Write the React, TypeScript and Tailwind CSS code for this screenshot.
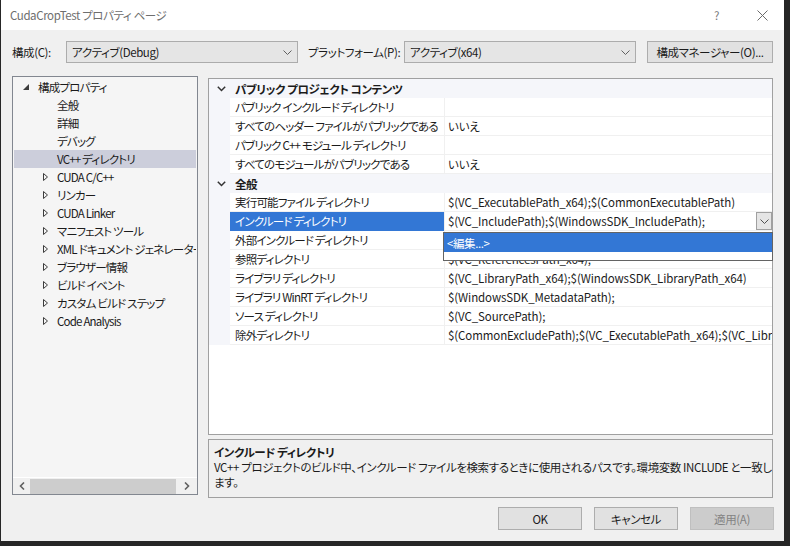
import React from "react";

type Row = { name: string; value: string; selected?: boolean };
type Section = { title: string; rows: Row[] };

const sections: Section[] = [
  {
    title: "パブリック プロジェクト コンテンツ",
    rows: [
      { name: "パブリック インクルード ディレクトリ", value: "" },
      { name: "すべてのヘッダー ファイルがパブリックである", value: "いいえ" },
      { name: "パブリック C++ モジュール ディレクトリ", value: "" },
      { name: "すべてのモジュールがパブリックである", value: "いいえ" },
    ],
  },
  {
    title: "全般",
    rows: [
      { name: "実行可能ファイル ディレクトリ", value: "$(VC_ExecutablePath_x64);$(CommonExecutablePath)" },
      { name: "インクルード ディレクトリ", value: "$(VC_IncludePath);$(WindowsSDK_IncludePath);", selected: true },
      { name: "外部インクルード ディレクトリ", value: "" },
      { name: "参照ディレクトリ", value: "$(VC_ReferencesPath_x64);" },
      { name: "ライブラリ ディレクトリ", value: "$(VC_LibraryPath_x64);$(WindowsSDK_LibraryPath_x64)" },
      { name: "ライブラリ WinRT ディレクトリ", value: "$(WindowsSDK_MetadataPath);" },
      { name: "ソース ディレクトリ", value: "$(VC_SourcePath);" },
      { name: "除外ディレクトリ", value: "$(CommonExcludePath);$(VC_ExecutablePath_x64);$(VC_LibraryPath_x64);" },
    ],
  },
];

const treeItems: { label: string; expander: boolean; selected?: boolean }[] = [
  { label: "全般", expander: false },
  { label: "詳細", expander: false },
  { label: "デバッグ", expander: false },
  { label: "VC++ ディレクトリ", expander: false, selected: true },
  { label: "CUDA C/C++", expander: true },
  { label: "リンカー", expander: true },
  { label: "CUDA Linker", expander: true },
  { label: "マニフェスト ツール", expander: true },
  { label: "XML ドキュメント ジェネレーター", expander: true },
  { label: "ブラウザー情報", expander: true },
  { label: "ビルド イベント", expander: true },
  { label: "カスタム ビルド ステップ", expander: true },
  { label: "Code Analysis", expander: true },
];

function Chevron({ color = "#606060" }: { color?: string }) {
  return (
    <svg width="9" height="5" viewBox="0 0 9 5">
      <polyline points="0.5,0.5 4.5,4.5 8.5,0.5" fill="none" stroke={color} strokeWidth="1" />
    </svg>
  );
}

function Combo({ text }: { text: string }) {
  return (
    <div className="w-[232px] h-[22px] shrink-0 bg-[#e5e5e5] border border-[#acacac] flex items-center pl-[5px] pr-[5px]">
      <span className="flex-1 whitespace-nowrap">{text}</span>
      <Chevron />
    </div>
  );
}

function Button({ label, disabled }: { label: string; disabled?: boolean }) {
  return (
    <div
      className={`w-[84px] h-[23px] flex items-center justify-center border ${
        disabled ? "bg-[#cccccc] border-[#bfbfbf] text-[#838383]" : "bg-[#e1e1e1] border-[#adadad]"
      }`}
    >
      {label}
    </div>
  );
}

export default function App() {
  return (
    <div className="w-[790px] h-[546px] bg-[#262626] pl-px overflow-hidden font-['Noto_Sans_CJK_JP',sans-serif] [font-feature-settings:'palt'] text-[11.5px] tracking-[-0.4px] leading-[16px] text-[#1b1b1b]">
      <div className="w-[783px] h-[541px] bg-[#f0f0f0] flex flex-col">
        {/* Title bar */}
        <div className="h-[30px] bg-white flex items-center pl-[9px] pr-[16px] text-[#6e6e6e]">
          <span className="flex-1">CudaCropTest プロパティ ページ</span>
          <span className="mr-[38px] text-[#777]">?</span>
          <svg width="11" height="11" viewBox="0 0 11 11">
            <path d="M0.5 0.5 L10.5 10.5 M10.5 0.5 L0.5 10.5" stroke="#6b6b6b" strokeWidth="1" />
          </svg>
        </div>

        {/* Configuration row */}
        <div className="mt-[11px] h-[22px] flex items-center pl-[11px] whitespace-nowrap">
          <span className="w-[54px] shrink-0">構成(C):</span>
          <Combo text="アクティブ(Debug)" />
          <span className="ml-[10px] w-[96px] shrink-0">プラットフォーム(P):</span>
          <Combo text="アクティブ(x64)" />
          <div className="ml-[11px] w-[126px] h-[22px] shrink-0 bg-[#e1e1e1] border border-[#adadad] flex items-center justify-center">
            構成マネージャー(O)...
          </div>
        </div>

        {/* Main area */}
        <div className="mt-[13px] h-[422px] flex pl-[11px]">
          {/* Tree */}
          <div className="w-[186px] h-[419px] shrink-0 border border-[#828790] bg-[#f5f5f5] flex flex-col tracking-[-0.8px]">
            <div className="flex-1 pt-px px-px overflow-hidden">
              <div className="h-[18px] flex items-center">
                <svg className="ml-[9px] mr-[9px]" width="6" height="6" viewBox="0 0 6 6">
                  <polygon points="6,0 6,6 0,6" fill="#3c3c3c" />
                </svg>
                <span>構成プロパティ</span>
              </div>
              {treeItems.map((it) => (
                <div
                  key={it.label}
                  className={`h-[18px] flex items-center whitespace-nowrap overflow-hidden ${it.selected ? "bg-[#cccedb]" : ""}`}
                >
                  <div className="w-[43px] shrink-0 flex justify-end pr-[9px]">
                    {it.expander && (
                      <svg width="5" height="8" viewBox="0 0 5 8">
                        <polygon points="0.5,0.5 4.5,4 0.5,7.5" fill="none" stroke="#3c3c3c" strokeWidth="1" />
                      </svg>
                    )}
                  </div>
                  <span>{it.label}</span>
                </div>
              ))}
            </div>
            {/* Horizontal scrollbar */}
            <div className="h-[17px] border-t border-white bg-[#f0f0f0] flex items-center">
              <div className="w-[17px] flex justify-center">
                <svg width="6" height="8" viewBox="0 0 6 8">
                  <polyline points="5,0.5 1.5,4 5,7.5" fill="none" stroke="#606060" strokeWidth="1.6" />
                </svg>
              </div>
              <div className="w-[146px] h-[15px] bg-[#cdcdcd]" />
              <div className="flex-1 flex justify-center">
                <svg width="6" height="8" viewBox="0 0 6 8">
                  <polyline points="1,0.5 4.5,4 1,7.5" fill="none" stroke="#606060" strokeWidth="1.6" />
                </svg>
              </div>
            </div>
          </div>

          {/* Right column */}
          <div className="ml-[10px] mt-[2px] w-[565px] flex flex-col">
            <div className="relative h-[357px] border border-[#a0a0a0] bg-white">
              {sections.map((s) => (
                <div key={s.title}>
                  <div className="h-[19px] bg-[#f5f6fa] flex items-center">
                    <div className="w-[21px] flex justify-center pl-[3px]">
                      <svg width="9" height="6" viewBox="0 0 9 6">
                        <polyline points="0.8,0.8 4.5,4.5 8.2,0.8" fill="none" stroke="#333" strokeWidth="1.5" />
                      </svg>
                    </div>
                    <span className="pl-[5px] font-bold">{s.title}</span>
                  </div>
                  {s.rows.map((r) => (
                    <div key={r.name} className="h-[19px] flex">
                      <div className="w-[21px] shrink-0 bg-[#f5f6fa]" />
                      <div
                        className={`w-[214px] shrink-0 pl-[5px] flex items-center whitespace-nowrap overflow-hidden border-b tracking-[-0.8px] ${
                          r.selected ? "bg-[#3377d5] text-white border-[#3377d5]" : "border-[#f0f0f0]"
                        }`}
                      >
                        {r.name}
                      </div>
                      <div className="flex-1 min-w-0 border-l border-b border-[#f0f0f0] pl-[3px] flex items-center whitespace-nowrap overflow-hidden tracking-[-0.1px]">
                        <span className="flex-1 overflow-hidden">{r.value}</span>
                        {r.selected && (
                          <div className="w-[16px] h-[18px] shrink-0 bg-[#e5e5e5] border border-[#a0a0a0] flex items-center justify-center">
                            <Chevron color="#505050" />
                          </div>
                        )}
                      </div>
                    </div>
                  ))}
                </div>
              ))}
              {/* Dropdown popup */}
              <div className="absolute left-[234px] top-[153px] w-[330px] h-[29px] bg-white border border-[#646464]">
                <div className="h-[19px] bg-[#3377d5] text-white pl-[3px] flex items-center">&lt;編集...&gt;</div>
              </div>
            </div>

            {/* Description */}
            <div className="mt-[4px] h-[59px] border border-[#a0a0a0] px-[5px] pt-[5px] leading-[15px] whitespace-nowrap overflow-hidden">
              <div className="font-bold">インクルード ディレクトリ</div>
              <div>
                VC++ プロジェクトのビルド中、インクルード ファイルを検索するときに使用されるパスです。環境変数 INCLUDE と一致し
                <br />
                ます。
              </div>
            </div>
          </div>
        </div>

        {/* Buttons */}
        <div className="mt-[9px] flex justify-end gap-[12px] pr-[10px]">
          <Button label="OK" />
          <Button label="キャンセル" />
          <Button label="適用(A)" disabled />
        </div>
      </div>
    </div>
  );
}
